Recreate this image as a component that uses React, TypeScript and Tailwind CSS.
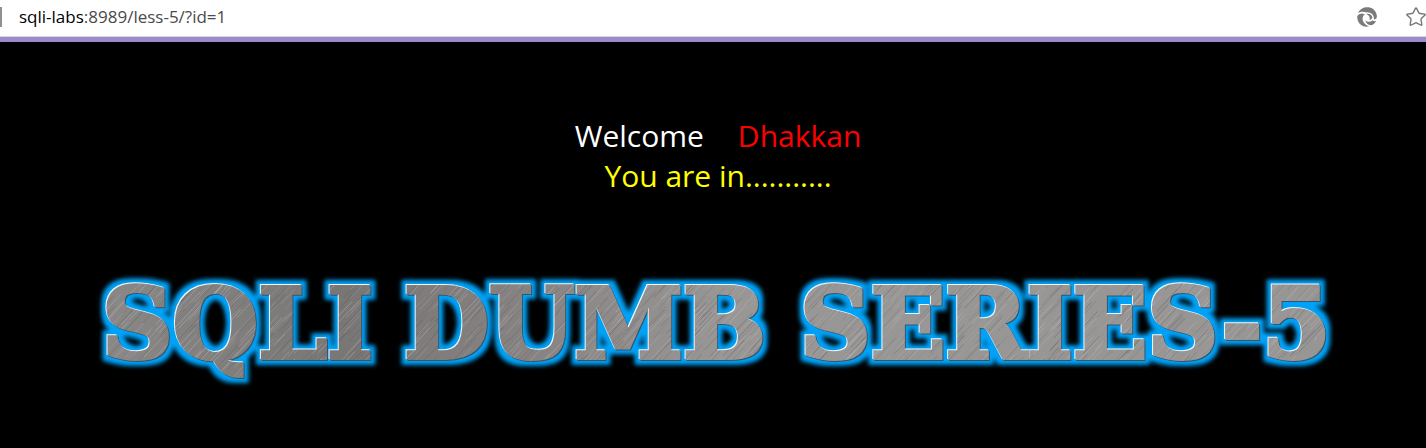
import { Star } from "lucide-react";

type Streak = { x: number; y: number; length: number; light: boolean; opacity: number };

function makeStreaks(count: number): Streak[] {
  let seed = 41;
  const next = () => {
    seed = (seed * 16807) % 2147483647;
    return seed / 2147483647;
  };
  return Array.from({ length: count }, () => ({
    x: next() * 1280 - 20,
    y: next() * 140,
    length: 10 + next() * 34,
    light: next() > 0.5,
    opacity: 0.12 + next() * 0.3,
  }));
}

const streaks = makeStreaks(2000);

function SwirlIcon() {
  return (
    <svg viewBox="0 0 20 20" className="size-5" fill="#7b7b7b" aria-hidden="true">
      <path d="M1 6C3 1.500 7.500-.3 11.800.3 16.500 1 19.800 5 19.900 9.500c0 1.800-1.300 3-2.900 3.100C17.400 8 13.500 4.800 9.300 5.400 7.500 4.400 3.800 4.200 1 6Z" />
      <path d="M.3 9C1.800 6.500 5.200 5.800 7.800 7.300 5.200 9.300 4.900 12.800 6.800 15.500c1.300 1.900 3.300 3.200 5.400 3.800C5.500 21.200-.3 16 .3 9Z" />
      <path d="M8.300 13.400c2.300 1.900 5.400 1.600 7.300-.2 1 1 2.300 1.200 3.500.6-1.200 3-3.200 4.400-5.500 4.500-2.700-.4-4.600-2.300-5.300-4.900Z" />
      <path d="M9.200 7c2.800-.8 5.600.6 6.200 3.400-.6 1.400-1.600 2.200-2.800 2.500.7-2.500-.7-5-3.400-5.900Z" />
    </svg>
  );
}

function AddressBar() {
  return (
    <header className="flex h-[37px] items-center border-b border-[#d6d6d6] bg-white pb-[3px]">
      <span className="h-5 w-[2px] bg-[#909090]" />
      <p className="ml-[17px] grow text-[17px] leading-6 text-[#4a4a4a]">
        <span className="text-black">sqli-labs</span>:8989/less-5/?id=1
      </p>
      <button type="button" aria-label="Page tools" className="shrink-0">
        <SwirlIcon />
      </button>
      <button type="button" aria-label="Add to favorites" className="-mr-px ml-7 shrink-0">
        <Star className="size-[22px] text-[#767676]" strokeWidth={1.5} />
      </button>
    </header>
  );
}

function MetalTitle() {
  return (
    <svg viewBox="0 0 1426 140" className="w-full">
      <defs>
        <linearGradient id="steel" x1="0" y1="0" x2="1" y2="0">
          <stop offset="0" stopColor="#8b8888" />
          <stop offset="0.2" stopColor="#797676" />
          <stop offset="0.35" stopColor="#878383" />
          <stop offset="0.5" stopColor="#999696" />
          <stop offset="1" stopColor="#989595" />
        </linearGradient>
        <pattern id="brushed" patternUnits="userSpaceOnUse" x="90" y="0" width="1260" height="140">
          <rect width="1260" height="140" fill="url(#steel)" />
          {streaks.map((s, i) => (
            <line
              key={i}
              x1={s.x}
              y1={s.y}
              x2={s.x + s.length * 0.68}
              y2={s.y - s.length * 0.73}
              stroke={s.light ? "#c4c0be" : "#5c5858"}
              strokeOpacity={s.opacity}
            />
          ))}
        </pattern>
        <filter id="neon" filterUnits="userSpaceOnUse" x="70" y="0" width="1300" height="140" colorInterpolationFilters="sRGB">
          <feMorphology in="SourceAlpha" operator="dilate" radius="5" result="wide" />
          <feGaussianBlur in="wide" stdDeviation="2.200" result="soft" />
          <feFlood floodColor="#00a2f8" />
          <feComposite in2="soft" operator="in" result="glow" />
          <feOffset in="SourceAlpha" dx="-1" dy="-1" result="up" />
          <feFlood floodColor="#eef8fb" />
          <feComposite in2="up" operator="in" result="shine" />
          <feOffset in="SourceAlpha" dx="1" dy="1" result="down" />
          <feFlood floodColor="#35566a" />
          <feComposite in2="down" operator="in" result="shade" />
          <feMerge>
            <feMergeNode in="glow" />
            <feMergeNode in="shade" />
            <feMergeNode in="shine" />
            <feMergeNode in="SourceGraphic" />
          </feMerge>
        </filter>
      </defs>
      <g
        className="font-['DejaVu_Serif',serif] text-[98px] font-bold"
        fill="url(#brushed)"
        stroke="url(#brushed)"
        strokeWidth="4"
        filter="url(#neon)"
      >
        <text x="102" y="96">SQLI</text>
        <text x="404" y="96">DUMB</text>
        <text x="800" y="96">SERIES-5</text>
      </g>
    </svg>
  );
}

export default function App() {
  return (
    <div className="flex min-h-screen flex-col bg-black font-['Open_Sans','Noto_Sans',sans-serif]">
      <AddressBar />
      <div className="h-[5px] bg-[#998bcc]" />
      <main className="pt-[74px]">
        <div className="pl-[10px] text-center text-[30px] leading-10">
          <p className="flex justify-center gap-[34px]">
            <span className="text-white">Welcome</span>
            <span className="text-[#ff0000]">Dhakkan</span>
          </p>
          <p className="text-[#ffff00]">You are in...........</p>
        </div>
        <h1 className="mt-[66px]">
          <MetalTitle />
        </h1>
      </main>
    </div>
  );
}
